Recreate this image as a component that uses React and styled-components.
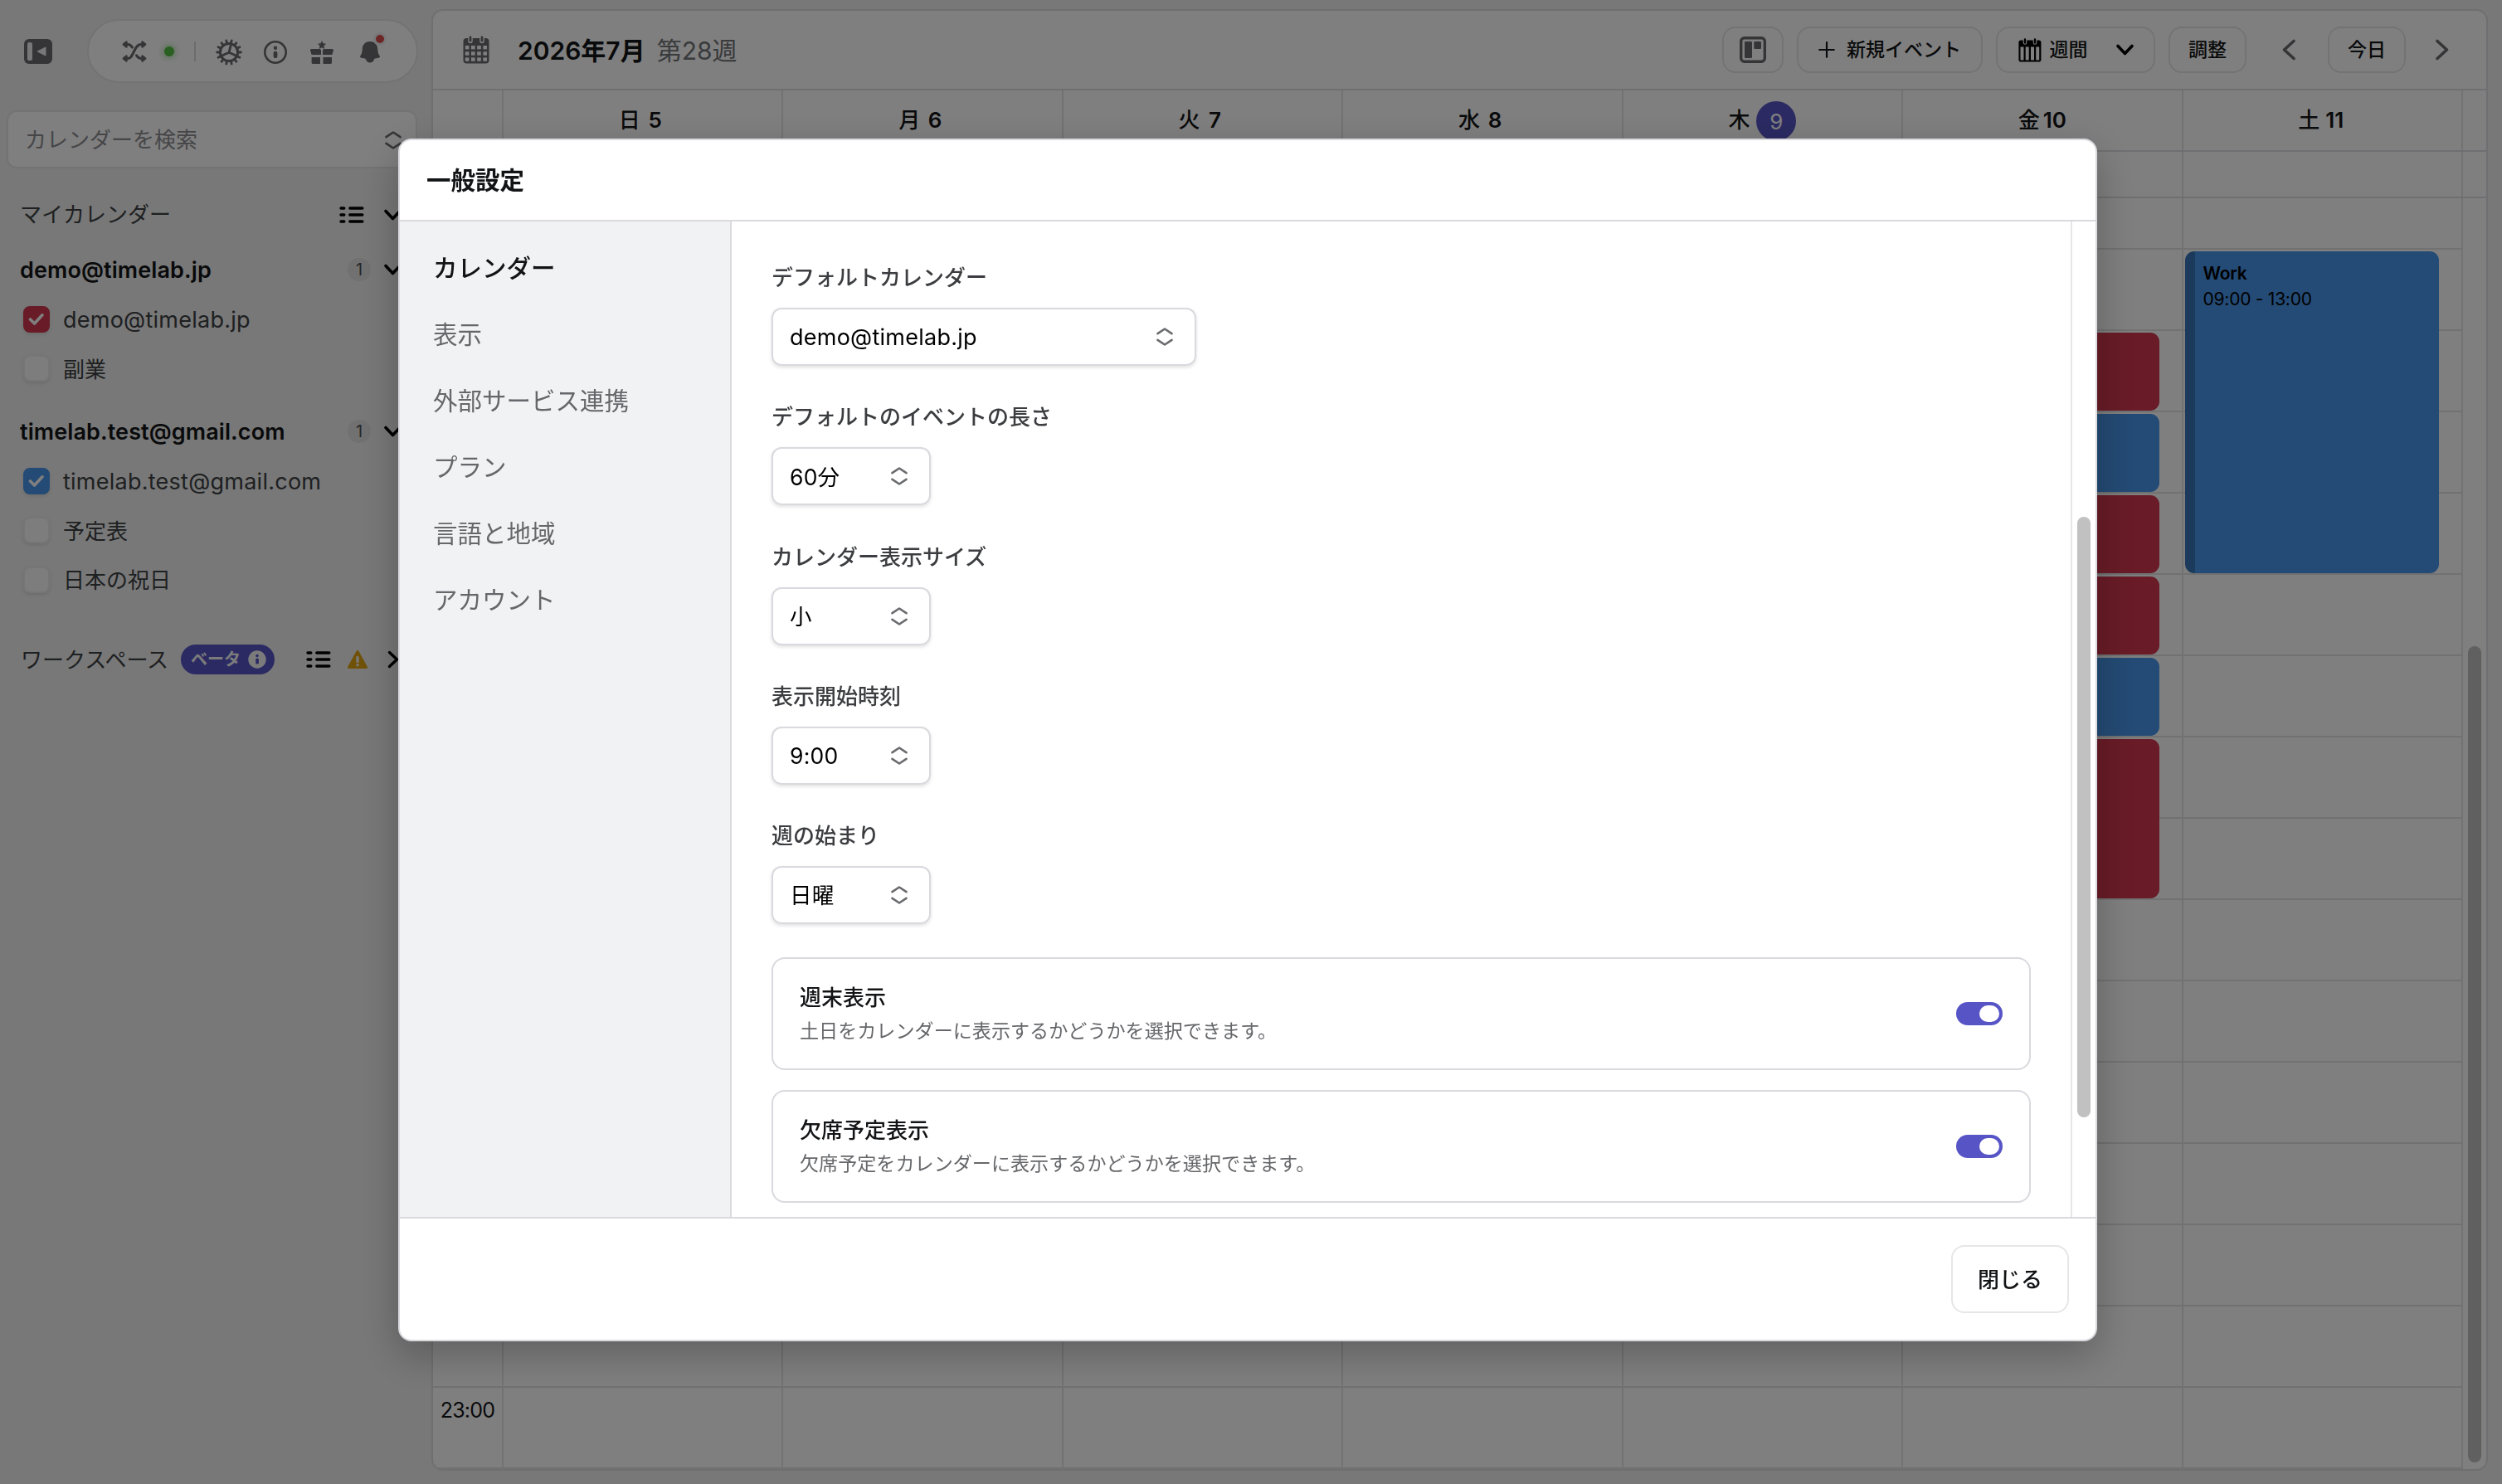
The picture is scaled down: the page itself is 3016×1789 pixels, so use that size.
import React from "react";
import styled, { createGlobalStyle } from "styled-components";

const LINE = "#dfdfe2";
const ACCENT = "#5755c6";
const RED = "#d2384e";
const BLUE = "#4896ea";

const HOUR = 98;
const LAST_HOUR = 23;

const days = [
  { name: "日", date: 5, events: [] },
  { name: "月", date: 6, events: [] },
  { name: "火", date: 7, events: [] },
  { name: "水", date: 8, events: [] },
  { name: "木", date: 9, today: true, events: [] },
  {
    name: "金",
    date: 10,
    events: [
      { start: 10, hours: 1, color: RED },
      { start: 11, hours: 1, color: BLUE },
      { start: 12, hours: 1, color: RED },
      { start: 13, hours: 1, color: RED },
      { start: 14, hours: 1, color: BLUE },
      { start: 15, hours: 2, color: RED },
    ],
  },
  {
    name: "土",
    date: 11,
    events: [
      { start: 9, hours: 4, color: BLUE, title: "Work", time: "09:00 - 13:00" },
    ],
  },
];

const hours = Array.from({ length: 15 }, (_, i) => i + 9);

const accounts = [
  {
    email: "demo@timelab.jp",
    calendars: [
      { name: "demo@timelab.jp", color: RED },
      { name: "副業" },
    ],
  },
  {
    email: "timelab.test@gmail.com",
    calendars: [
      { name: "timelab.test@gmail.com", color: BLUE },
      { name: "予定表" },
      { name: "日本の祝日" },
    ],
  },
];

const menu = ["カレンダー", "表示", "外部サービス連携", "プラン", "言語と地域", "アカウント"];

const fields = [
  { label: "デフォルトカレンダー", value: "demo@timelab.jp", wide: true },
  { label: "デフォルトのイベントの長さ", value: "60分" },
  { label: "カレンダー表示サイズ", value: "小" },
  { label: "表示開始時刻", value: "9:00" },
  { label: "週の始まり", value: "日曜" },
];

const switches = [
  { title: "週末表示", text: "土日をカレンダーに表示するかどうかを選択できます。" },
  { title: "欠席予定表示", text: "欠席予定をカレンダーに表示するかどうかを選択できます。" },
];

/* icons */

const CollapseIcon = () => (
  <svg width="34" height="30" viewBox="0 0 34 30">
    <rect width="34" height="30" rx="6" fill="#6a6b6e" />
    <rect x="4" y="4" width="6" height="22" rx="2.6" fill="#f0f0f1" />
    <path d="M26 10v10l-10-5z" fill="#f0f0f1" stroke="#f0f0f1" strokeLinejoin="round" />
  </svg>
);

const ShuffleIcon = () => (
  <svg width="30" height="26" viewBox="0 0 30 26" fill="none" stroke="#6a6b6e" strokeWidth="3" strokeLinecap="round">
    <path d="M5 21.500h2c3 0 4.500-2 7.500-8.500S19.500 4.500 23 4.500h1.500" />
    <path d="M5 4.500h2c2.500 0 4 1.200 5.500 3.600M17.500 17.800c1.500 2.500 3 3.700 5.500 3.700h1.500" />
    <path d="M5.500 1.500v6L1.800 4.500zM5.500 18.500v6l-3.700-3zM24.500 1.500v6l3.700-3zM24.500 18.500v6l3.700-3z" fill="#6a6b6e" strokeWidth="2.400" strokeLinejoin="round" />
  </svg>
);

const GearIcon = () => (
  <svg width="32" height="32" viewBox="0 0 32 32" fill="none" stroke="#6a6b6e" strokeLinecap="round">
    <circle cx="16" cy="16" r="10.600" strokeWidth="3" />
    {Array.from({ length: 14 }, (_, i) => (
      <path key={i} d="M16 4V1.600" strokeWidth="2.800" transform={`rotate(${(i + 0.5) * (360 / 14)} 16 16)`} />
    ))}
    <path d="M16 16.300l2.500-10M16 16.300L6.500 20.500M16 16.300l9.500 4.200" strokeWidth="2.800" />
  </svg>
);

const InfoIcon = () => (
  <svg width="28" height="28" viewBox="0 0 28 28">
    <circle cx="14" cy="14" r="12.700" fill="none" stroke="#6a6b6e" strokeWidth="2.600" />
    <circle cx="14" cy="8.800" r="2.200" fill="#6a6b6e" />
    <rect x="11.600" y="12.700" width="4.800" height="8.400" rx="2.200" fill="#6a6b6e" />
  </svg>
);

const GiftIcon = () => (
  <svg width="28" height="28" viewBox="0 0 28 28" fill="#6a6b6e">
    <path d="M14 0l1.500 3.300 3.600.5-2.600 2.500.6 3.600L14 8.200l-3.100 1.700.6-3.600-2.600-2.500 3.600-.5z" />
    <path d="M1.500 10H11c1 .2 1.900.6 2 1.500V17H1.600L0 11.500C0 10.600.6 10 1.500 10zM26.500 10H17c-1 .2-1.900.6-2 1.500V17h11.400L28 11.500c0-.9-.6-1.500-1.500-1.500z" />
    <path d="M1.600 20H12v8H3c-1 0-1.400-.5-1.400-1.400zM26 20H15.500v8h9.100c1 0 1.400-.5 1.400-1.400z" />
  </svg>
);

const BellIcon = () => (
  <svg width="24" height="26" viewBox="0 0 24 26" fill="#6a6b6e">
    <path d="M12 0c6 0 9 4 9.200 9 .2 4.200.8 6 2.400 8.200.8 1.100.3 2.300-1.200 2.600-1.800.4-3.400.7-5 .9C16.600 23.600 14.600 25.600 12 25.600s-4.600-2-5.400-4.900c-1.600-.2-3.200-.5-5-.9-1.500-.3-2-1.500-1.200-2.600C2 15 2.600 13.200 2.800 9 3 4 6 0 12 0z" />
  </svg>
);

const SortIcon = ({ color = "#6a6b6e" }) => (
  <svg width="20" height="22" viewBox="0 0 20 22" fill="none" stroke={color} strokeWidth="2.600" strokeLinecap="round" strokeLinejoin="round">
    <path d="M1.500 7.200L10 1.500l8.500 5.700M1.500 14.800l8.500 5.700 8.500-5.700" />
  </svg>
);

const ListIcon = () => (
  <svg width="30" height="20" viewBox="0 0 30 20" stroke="#000" strokeWidth="3.400" strokeLinecap="round">
    <path d="M2 2h3.800M12.800 2h15M2 10h3.800M12.800 10h15M2 18h3.800M12.800 18h15" />
  </svg>
);

const ChevronDown = () => (
  <svg width="21" height="14" viewBox="0 0 21 14" fill="none" stroke="#000" strokeWidth="3.600" strokeLinecap="round" strokeLinejoin="round">
    <path d="M2 2.500l8.500 9 8.500-9" />
  </svg>
);

const ChevronRight = () => (
  <svg width="21" height="22" viewBox="0 0 21 22" fill="none" stroke="#000" strokeWidth="3.400" strokeLinecap="round" strokeLinejoin="round">
    <path d="M6.500 2.500l9 8.500-9 8.500" />
  </svg>
);

const ArrowIcon = ({ flip }) => (
  <svg width="16" height="26" viewBox="0 0 16 26" fill="none" stroke="#6a6b6e" strokeWidth="3.600" strokeLinecap="round" strokeLinejoin="round">
    <path d={flip ? "M2 2.500l11.500 10.500L2 23.500" : "M14 2.500L2.500 13 14 23.500"} />
  </svg>
);

const WarnIcon = () => (
  <svg width="26" height="24" viewBox="0 0 26 24">
    <path d="M13 2.500L23.500 21.500h-21z" fill="#dfa40f" stroke="#dfa40f" strokeWidth="3" strokeLinejoin="round" />
    <path d="M13 9.500v5" stroke="#f0f0f1" strokeWidth="3.400" strokeLinecap="round" />
    <circle cx="13" cy="18.800" r="1.800" fill="#f0f0f1" />
  </svg>
);

const BetaInfoIcon = () => (
  <svg width="22" height="22" viewBox="0 0 22 22">
    <circle cx="11" cy="11" r="10.700" fill="#f6f6f8" />
    <circle cx="11" cy="6.500" r="1.800" fill={ACCENT} />
    <rect x="9.200" y="9.500" width="3.700" height="7" rx="1.600" fill={ACCENT} />
  </svg>
);

const CheckIcon = () => (
  <svg width="20" height="16" viewBox="0 0 20 16" fill="none" stroke="#fff" strokeWidth="3.600" strokeLinecap="round" strokeLinejoin="round">
    <path d="M2.500 8l5 5L17 2.800" />
  </svg>
);

const MonthIcon = () => (
  <svg width="32" height="34" viewBox="0 0 32 34">
    <rect x=".5" y="3" width="31" height="30.500" rx="4" fill="#6a6b6e" />
    <path d="M9 1.500v5M23 1.500v5" stroke="#fff" strokeWidth="5.500" strokeLinecap="round" />
    <path d="M9 1.800v4.400M23 1.800v4.400" stroke="#6a6b6e" strokeWidth="2.800" strokeLinecap="round" />
    {[12, 19.300, 26.400].map((y) =>
      [2.800, 10, 17.200, 24.400].map((x) => (
        <rect key={`${x}-${y}`} x={x} y={y} width="4.600" height="4.400" fill="#fff" />
      ))
    )}
  </svg>
);

const WeekIcon = () => (
  <svg width="28" height="29" viewBox="0 0 28 29">
    <rect x=".4" y="2.500" width="27" height="26" rx="2.800" fill="#000" />
    <path d="M8 2v3.500M20 2v3.500" stroke="#fff" strokeWidth="4.600" strokeLinecap="round" />
    <path d="M8 1.500v4M20 1.500v4" stroke="#000" strokeWidth="2.400" strokeLinecap="round" />
    {[2.500, 8.700, 15, 21.200].map((x) => (
      <rect key={x} x={x} y="10.500" width="4" height="16" fill="#fff" />
    ))}
  </svg>
);

const BoardIcon = () => (
  <svg width="32" height="32" viewBox="0 0 32 32" fill="#6a6b6e">
    <rect x="1.700" y="1.700" width="28.600" height="28.600" rx="4" fill="none" stroke="#6a6b6e" strokeWidth="3.400" />
    <rect x="6" y="6" width="9" height="20" rx="1.200" />
    <rect x="17.300" y="6" width="8.700" height="9" rx="1.200" />
  </svg>
);

const PlusIcon = () => (
  <svg width="20" height="20" viewBox="0 0 20 20" stroke="#131416" strokeWidth="2.200" strokeLinecap="round">
    <path d="M10 1.200v17.600M1.200 10h17.600" />
  </svg>
);

function Sidebar() {
  return (
    <Side>
      <TopRow>
        <CollapseIcon />
        <Pill>
          <ShuffleIcon />
          <OnlineDot />
          <Divider />
          <PillIcons>
            <GearIcon />
            <InfoIcon />
            <GiftIcon />
            <BellWrap>
              <BellIcon />
              <i />
            </BellWrap>
          </PillIcons>
        </Pill>
      </TopRow>
      <Search>
        <span>カレンダーを検索</span>
        <SortIcon />
      </Search>
      <SectionHead>
        <span>マイカレンダー</span>
        <HeadIcons gap={24}>
          <ListIcon />
          <ChevronDown />
        </HeadIcons>
      </SectionHead>
      {accounts.map((account) => (
        <Account key={account.email}>
          <AccountHead>
            <strong>{account.email}</strong>
            <HeadIcons gap={16}>
              <Count>1</Count>
              <ChevronDown />
            </HeadIcons>
          </AccountHead>
          {account.calendars.map((cal) => (
            <CalendarRow key={cal.name}>
              <Checkbox color={cal.color}>{cal.color && <CheckIcon />}</Checkbox>
              <CalendarName latin={cal.name.includes("@")}>{cal.name}</CalendarName>
            </CalendarRow>
          ))}
        </Account>
      ))}
      <WorkspaceHead>
        <span>ワークスペース</span>
        <Beta>
          ベータ
          <BetaInfoIcon />
        </Beta>
        <HeadIcons gap={19}>
          <ListIcon />
          <WarnIcon />
          <ChevronRight />
        </HeadIcons>
      </WorkspaceHead>
    </Side>
  );
}

function Calendar() {
  return (
    <Panel>
      <Toolbar>
        <MonthIcon />
        <Title>
          2026年7月<span>第28週</span>
        </Title>
        <Tools>
          <ToolButton square>
            <BoardIcon />
          </ToolButton>
          <ToolButton width={224}>
            <PlusIcon />
            <Label gap={14}>新規イベント</Label>
          </ToolButton>
          <ToolButton width={192}>
            <WeekIcon />
            <Label gap={10}>週間</Label>
            <Label gap={34}>
              <ChevronDown />
            </Label>
          </ToolButton>
          <ToolButton width={94}>調整</ToolButton>
          <Arrow>
            <ArrowIcon />
          </Arrow>
          <ToolButton width={94}>今日</ToolButton>
          <Arrow>
            <ArrowIcon flip />
          </Arrow>
        </Tools>
      </Toolbar>
      <WeekRow height={74}>
        <TimeCell />
        {days.map((day) => (
          <DayHead key={day.date} today={day.today}>
            {day.name}
            <b>{day.date}</b>
          </DayHead>
        ))}
        <Gutter />
      </WeekRow>
      <WeekRow height={56}>
        <TimeCell />
        {days.map((day) => (
          <DayHead key={day.date} />
        ))}
        <Gutter />
      </WeekRow>
      <Body>
        <DayColumn first>
          <Slot row={1} />
          {hours.map((h) => (
            <Slot key={h} row={h - 7}>
              {h === LAST_HOUR && `${h}:00`}
            </Slot>
          ))}
        </DayColumn>
        {days.map((day) => (
          <DayColumn key={day.date}>
            <Slot row={1} />
            {hours.map((h) => (
              <Slot key={h} row={h - 7} />
            ))}
            {day.events.map((ev) => (
              <Event key={ev.start} start={ev.start} hours={ev.hours} color={ev.color}>
                <b>{ev.title}</b>
                <span>{ev.time}</span>
              </Event>
            ))}
          </DayColumn>
        ))}
        <ScrollTrack top={540} bottom={8}>
          <Thumb />
        </ScrollTrack>
      </Body>
    </Panel>
  );
}

function SettingsDialog() {
  return (
    <Overlay>
      <Dialog>
        <DialogHead>一般設定</DialogHead>
        <DialogBody>
          <Menu>
            {menu.map((item, i) => (
              <MenuItem key={item} active={i === 0}>
                {item}
              </MenuItem>
            ))}
          </Menu>
          <Content>
            {fields.map((field) => (
              <Field key={field.label}>
                <FieldLabel>{field.label}</FieldLabel>
                <Select wide={field.wide}>
                  <span>{field.value}</span>
                  <SortIcon />
                </Select>
              </Field>
            ))}
            {switches.map((item) => (
              <SwitchCard key={item.title}>
                <div>
                  <h4>{item.title}</h4>
                  <p>{item.text}</p>
                </div>
                <Toggle />
              </SwitchCard>
            ))}
          </Content>
          <ScrollTrack top={356} bottom={120} bordered>
            <Thumb />
          </ScrollTrack>
        </DialogBody>
        <DialogFoot>
          <CloseButton>閉じる</CloseButton>
        </DialogFoot>
      </Dialog>
    </Overlay>
  );
}

export default function App() {
  return (
    <Page>
      <GlobalStyle />
      <Sidebar />
      <Calendar />
      <SettingsDialog />
    </Page>
  );
}

const GlobalStyle = createGlobalStyle`
  * {
    box-sizing: border-box;
  }

  body {
    margin: 0;
    overflow: hidden;
    font-family: Inter, "Noto Sans CJK JP", sans-serif;
    font-size: 26px;
    line-height: 1.4;
    color: #131416;
  }

  svg {
    display: block;
    flex: none;
  }

  button {
    font: inherit;
    color: inherit;
    background: none;
    padding: 0;
  }
`;

const Page = styled.div`
  display: flex;
  height: 1789px;
  background: #f0f0f1;
  padding: 11px 17px 16px 0;
`;

/* sidebar */

const Side = styled.aside`
  width: 520px;
  flex: none;
  padding: 12px 0 0 8px;
  color: #3c4043;
`;

const TopRow = styled.div`
  display: flex;
  align-items: center;
  padding-left: 21px;
  height: 77px;
  margin-bottom: 33px;
`;

const Pill = styled.div`
  display: flex;
  align-items: center;
  width: 399px;
  height: 77px;
  margin-left: 42px;
  padding-left: 40px;
  border: 2px solid #e6e6e8;
  border-radius: 39px;
  background: #fff;
`;

const OnlineDot = styled.span`
  width: 12px;
  height: 12px;
  margin: 0 24px 0 21px;
  border-radius: 50%;
  background: #52bf41;
  box-shadow: 0 0 8px 1px rgba(82, 191, 65, 0.6);
`;

const Divider = styled.span`
  width: 2px;
  height: 24px;
  background: #d8d8da;
`;

const PillIcons = styled.div`
  display: flex;
  align-items: center;
  gap: 28px;
  margin: 2px 0 0 24px;

  svg:first-child {
    margin-right: -2px;
  }
`;

const BellWrap = styled.span`
  position: relative;
  margin-left: 4px;

  i {
    position: absolute;
    top: -11px;
    right: -10px;
    width: 16px;
    height: 16px;
    border: 3px solid #f0f1f4;
    border-radius: 50%;
    background: #db4c4c;
  }
`;

const Search = styled.div`
  display: flex;
  align-items: center;
  justify-content: space-between;
  width: 495px;
  height: 70px;
  padding: 2px 17px 0 20px;
  border: 2px solid #e6e6e8;
  border-radius: 12px;
  background: #fff;
  color: #8c8c90;
`;

const SectionHead = styled.div`
  display: flex;
  align-items: center;
  justify-content: space-between;
  height: 60px;
  margin: 26px 0 6px;
  padding: 0 36px 0 16px;

  span {
    padding-top: 1px;
  }
`;

const HeadIcons = styled.div`
  display: flex;
  align-items: center;
  gap: ${(p) => p.gap}px;
`;

const Account = styled.section`
  margin-bottom: 16px;
`;

const AccountHead = styled.div`
  display: flex;
  align-items: center;
  justify-content: space-between;
  height: 60px;
  padding: 0 36px 0 16px;
  color: #131416;

  strong {
    padding-top: 2px;
    font-size: 27px;
    font-weight: 600;
    letter-spacing: 0.1px;
  }
`;

const Count = styled.span`
  width: 28px;
  height: 28px;
  border-radius: 50%;
  background: #e2e2e4;
  color: #4c4d50;
  font-size: 20px;
  line-height: 28px;
  text-align: center;
`;

const CalendarRow = styled.div`
  display: flex;
  align-items: center;
  height: 59.5px;
  padding-left: 20px;
  gap: 16px;
`;

const CalendarName = styled.span`
  font-size: ${(p) => (p.latin ? 27 : 26)}px;
  letter-spacing: ${(p) => (p.latin ? "0.25px" : 0)};
  padding-top: 3px;
`;

const Checkbox = styled.span`
  display: flex;
  align-items: center;
  justify-content: center;
  width: 32px;
  height: 32px;
  border: 2px solid ${(p) => p.color || "#ececee"};
  border-radius: 8px;
  background: ${(p) => p.color || "#fafafa"};
  box-shadow: 0 2px 4px rgba(0, 0, 0, 0.1);
`;

const WorkspaceHead = styled.div`
  display: flex;
  align-items: center;
  height: 60px;
  margin-top: 36px;
  padding: 0 36px 0 17px;

  > span:first-child {
    padding-top: 3px;
  }

  ${HeadIcons} {
    margin-left: auto;
  }
`;

const Beta = styled.span`
  display: flex;
  align-items: center;
  gap: 9px;
  width: 113px;
  height: 36px;
  margin-left: 15px;
  padding: 1px 0 0 12px;
  border-radius: 18px;
  background: ${ACCENT};
  color: #f6f6f8;
  font-size: 20px;
  font-weight: 600;
  white-space: nowrap;
`;

/* calendar */

const Panel = styled.main`
  display: flex;
  flex-direction: column;
  flex: 1;
  border: 2px solid ${LINE};
  border-radius: 14px;
  background: #fff;
  overflow: hidden;
`;

const Toolbar = styled.header`
  display: flex;
  align-items: center;
  height: 96px;
  flex: none;
  padding: 0 45px 0 36px;
  border-bottom: 2px solid ${LINE};
`;

const Title = styled.h1`
  margin: 0 0 0 34px;
  padding-top: 1px;
  font-size: 30px;
  font-weight: 600;

  span {
    margin-left: 14px;
    font-weight: 400;
    color: #727478;
  }
`;

const Tools = styled.div`
  display: flex;
  align-items: center;
  gap: 16px;
  margin-left: auto;
`;

const ToolButton = styled.button`
  display: flex;
  align-items: center;
  justify-content: center;
  width: ${(p) => (p.square ? 74 : p.width)}px;
  height: 56px;
  border: 2px solid #e6e6e8;
  border-radius: 16px;
  font-size: 23px;
  font-weight: 500;
`;

const Label = styled.span`
  margin-left: ${(p) => p.gap}px;
`;

const Arrow = styled.span`
  display: flex;
  justify-content: center;
  width: 66px;
  padding-left: 3px;

  &:last-child {
    width: 36px;
    padding-left: 0;
    justify-content: flex-end;
  }
`;

const WeekRow = styled.div`
  display: grid;
  grid-template-columns: 85px repeat(7, 1fr) 28px;
  flex: none;
  height: ${(p) => p.height}px;
  border-bottom: 2px solid ${LINE};
`;

const TimeCell = styled.div`
  border-right: 2px solid #e4e4e6;
`;

const Gutter = styled.div``;

const DayHead = styled.div`
  display: flex;
  align-items: center;
  justify-content: center;
  gap: ${(p) => (p.today ? 8 : 4)}px;
  padding-top: 1px;
  border-right: 2px solid #e4e4e6;
  font-weight: 500;

  b {
    width: ${(p) => (p.today ? 48 : 28)}px;
    height: ${(p) => (p.today ? "48px" : "auto")};
    line-height: ${(p) => (p.today ? "50px" : "inherit")};
    border-radius: 50%;
    text-align: center;
    background: ${(p) => (p.today ? ACCENT : "none")};
    color: ${(p) => (p.today ? "#fff" : "inherit")};
    font-weight: ${(p) => (p.today ? 400 : 600)};
  }
`;

const Body = styled.div`
  display: grid;
  grid-template-columns: 85px repeat(7, 1fr) 28px;
  flex: 1;
`;

const DayColumn = styled.div`
  display: grid;
  grid-template-rows: 62px repeat(15, ${HOUR}px);
  grid-template-columns: minmax(0, 1fr);
  border-right: 2px solid #e4e4e6;
  ${(p) => p.first && "text-align: center;"}
`;

const Slot = styled.div`
  grid-column: 1;
  grid-row: ${(p) => p.row};
  padding-top: 11px;
  border-bottom: 2px solid #e2e2e4;
  font-size: 25px;
  letter-spacing: -0.8px;
  line-height: 32px;
`;

const Event = styled.article`
  grid-column: 1;
  grid-row: ${(p) => p.start - 7} / span ${(p) => p.hours};
  display: flex;
  flex-direction: column;
  margin: 2px 27px 2px 2px;
  padding: 11px 0 0 10px;
  border-left: 12px solid rgba(0, 0, 0, 0.22);
  border-radius: 11px;
  background: ${(p) => p.color};
  background-clip: border-box;
  color: #000;
  font-size: 21px;
  letter-spacing: -0.25px;
  line-height: 31px;

  b {
    font-weight: 600;
  }
`;

const ScrollTrack = styled.div`
  display: flex;
  flex: none;
  width: ${(p) => (p.bordered ? 30 : 28)}px;
  padding: ${(p) => p.top}px 6px ${(p) => p.bottom}px;
  border-left: ${(p) => (p.bordered ? "2px solid #e6e6e8" : "none")};
`;

const Thumb = styled.span`
  width: 16px;
  border-radius: 8px;
  background: #c1c1c1;
`;

/* dialog */

const Overlay = styled.div`
  position: fixed;
  inset: 0;
  display: flex;
  justify-content: center;
  padding: 167px 8px 0 0;
  background: rgba(0, 0, 0, 0.5);
`;

const Dialog = styled.div`
  display: flex;
  flex-direction: column;
  width: 2048px;
  height: 1450px;
  border: 2px solid #d9d9de;
  border-radius: 16px;
  background: #fff;
  box-shadow: 0 16px 48px rgba(0, 0, 0, 0.25);
  overflow: hidden;
`;

const DialogHead = styled.h2`
  display: flex;
  align-items: center;
  flex: none;
  height: 98px;
  margin: 0;
  padding: 2px 0 0 32px;
  border-bottom: 2px solid #d9d9de;
  font-size: 29.5px;
  font-weight: 600;
`;

const DialogBody = styled.div`
  display: flex;
  height: 1200px;
`;

const Menu = styled.nav`
  width: 400px;
  flex: none;
  padding: 16px 0 0 40px;
  border-right: 2px solid #d9d9de;
  background: #f1f2f4;
`;

const MenuItem = styled.div`
  height: 80px;
  line-height: 80px;
  font-size: 29.5px;
  font-weight: ${(p) => (p.active ? 500 : 400)};
  color: ${(p) => (p.active ? "#131416" : "#66676a")};
`;

const Content = styled.div`
  flex: 1;
  padding: 49px 48px 0;
`;

const Field = styled.div`
  height: 168.250px;
`;

const FieldLabel = styled.label`
  display: block;
  height: 55px;
  line-height: 38px;
  font-weight: 500;
  color: #3c3d40;
`;

const Select = styled.div`
  display: flex;
  align-items: center;
  justify-content: space-between;
  width: ${(p) => (p.wide ? 512 : 192)}px;
  height: 70px;
  padding: 0 26px 0 20px;
  border: 2px solid #d9d9de;
  border-radius: 12px;
  box-shadow: 0 2px 4px rgba(0, 0, 0, 0.12);
  color: #000;

  span {
    padding-top: 2px;
    font-size: ${(p) => (p.wide ? 27 : 26.5)}px;
    letter-spacing: ${(p) => (p.wide ? "0.25px" : "0.2px")};
  }
`;

const SwitchCard = styled.div`
  display: flex;
  align-items: center;
  justify-content: space-between;
  height: 136px;
  margin: -3.250px 0 24px;
  padding: 0 32px;
  border: 2px solid #d9d9de;
  border-radius: 16px;

  & + & {
    margin-top: 0;
  }

  h4 {
    margin: 0;
    font-size: 26px;
    font-weight: 500;
    line-height: 41px;
  }

  p {
    margin: 0;
    font-size: 23.100px;
    line-height: 40px;
    color: #66676a;
  }
`;

const Toggle = styled.span`
  width: 56px;
  height: 28px;
  padding: 4px;
  border-radius: 14px;
  background: ${ACCENT};

  &::after {
    content: "";
    display: block;
    width: 24px;
    height: 20px;
    margin-left: auto;
    border-radius: 10px;
    background: #fff;
  }
`;

const DialogFoot = styled.footer`
  display: flex;
  align-items: center;
  justify-content: flex-end;
  flex: 1;
  padding-right: 32px;
  border-top: 2px solid #d9d9de;
`;

const CloseButton = styled.button`
  width: 142px;
  height: 82px;
  padding-top: 2px;
  border: 2px solid #e6e6e8;
  border-radius: 16px;
  font-weight: 500;
`;
